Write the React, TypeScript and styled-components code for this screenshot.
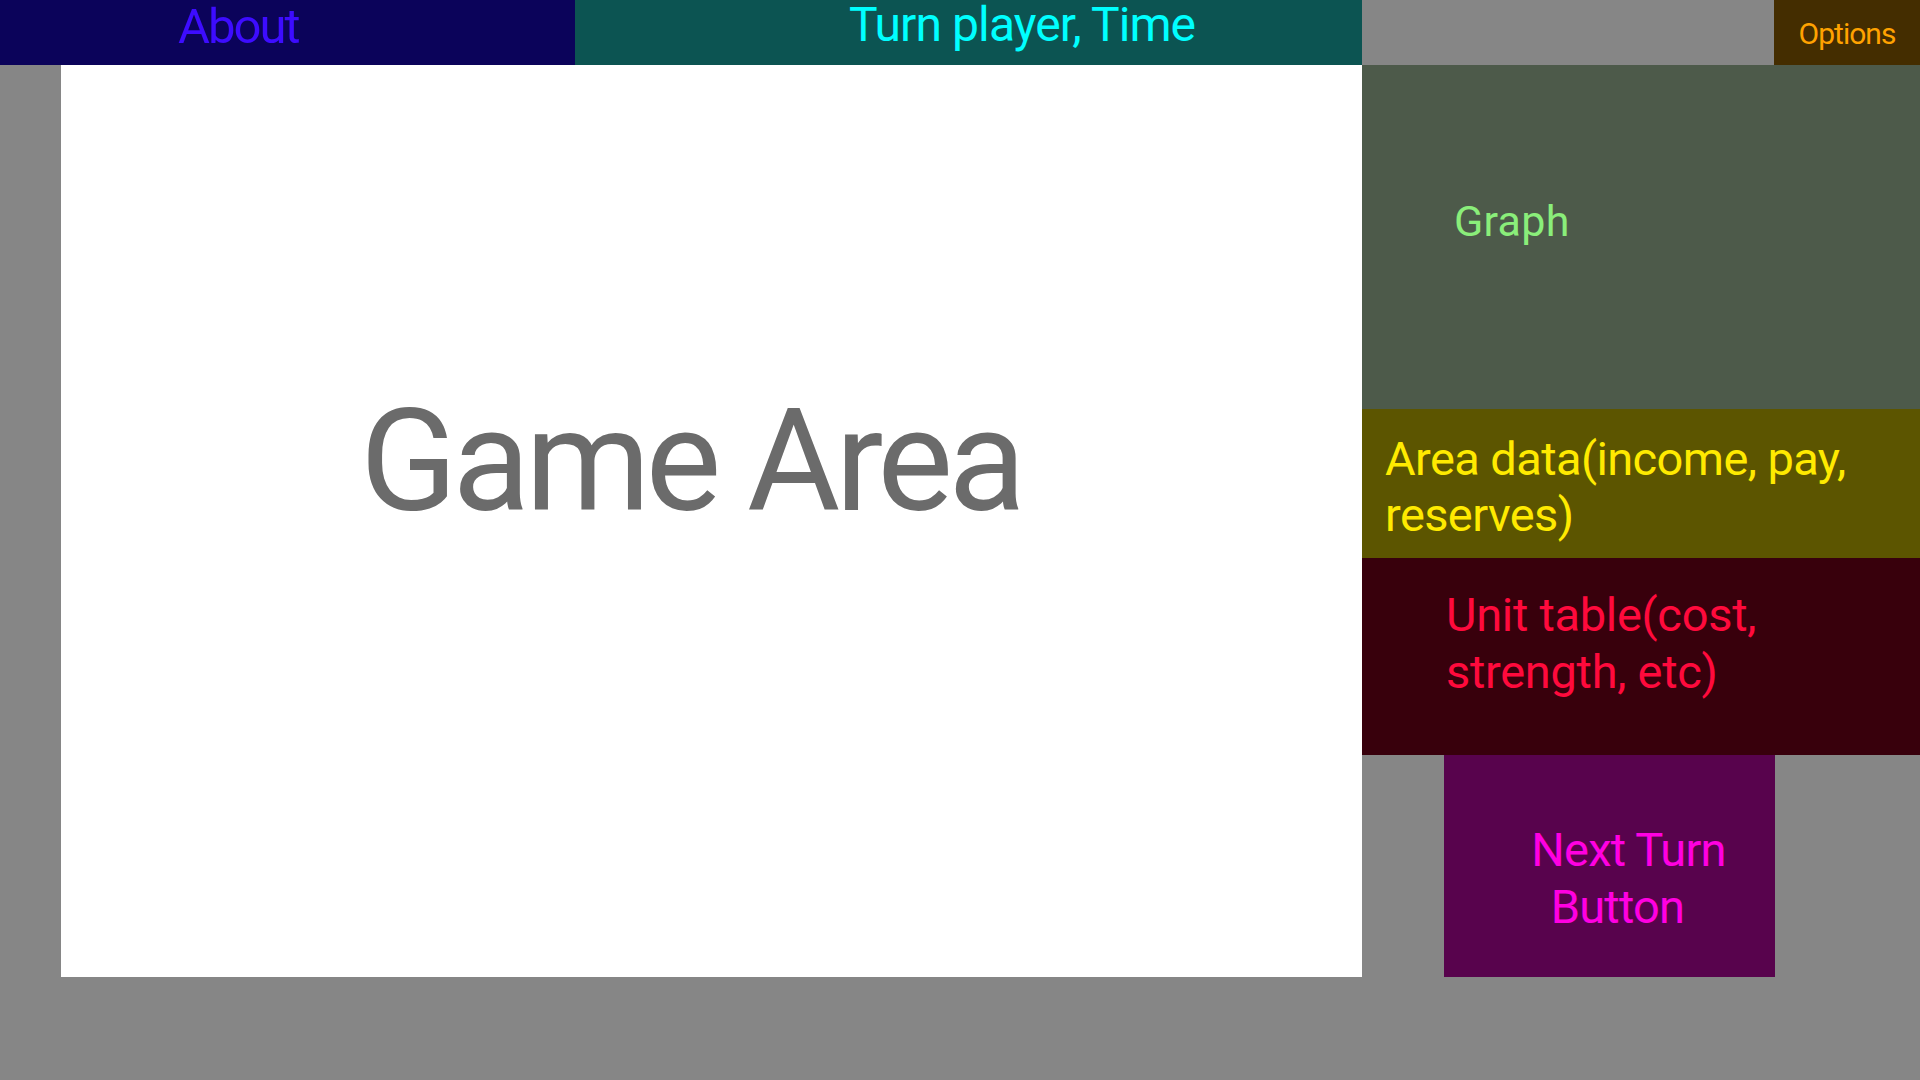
import React from "react";
import styled, { createGlobalStyle } from "styled-components";

const Global = createGlobalStyle`
  html, body {
    margin: 0;
    padding: 0;
    background: #868686;
    font-family: Roboto, "Noto Sans", sans-serif;
  }
  #root { height: 1080px; }
`;

const Page = styled.div`
  width: 1920px;
  height: 1080px;
  background: #868686;
  display: flex;
  flex-direction: column;
  overflow: hidden;
`;

const TopBar = styled.header`
  display: flex;
  height: 65px;
  flex: none;
`;

const BarCell = styled.div<{ $w?: number; $bg: string; $fg: string; $size: number; $pt: number; $pl?: number; $ls: number; $center?: boolean }>`
  width: ${(p) => (p.$w ? `${p.$w}px` : "auto")};
  flex: ${(p) => (p.$w ? "none" : "1")};
  height: 65px;
  box-sizing: border-box;
  background: ${(p) => p.$bg};
  color: ${(p) => p.$fg};
  font-size: ${(p) => p.$size}px;
  line-height: 1;
  letter-spacing: ${(p) => p.$ls}px;
  padding-top: ${(p) => p.$pt}px;
  padding-left: ${(p) => p.$pl ?? 0}px;
  text-align: ${(p) => (p.$center ? "center" : "left")};
  white-space: nowrap;
`;

const Main = styled.main`
  display: flex;
  padding-left: 61px;
  height: 912px;
  flex: none;
`;

const GameArea = styled.section`
  width: 1301px;
  height: 912px;
  background: #ffffff;
  color: #6b6b6b;
  font-size: 143px;
  line-height: 1;
  letter-spacing: -5px;
  box-sizing: border-box;
  padding-top: 325px;
  padding-left: 299px;
  white-space: nowrap;
`;

const Sidebar = styled.aside`
  width: 558px;
  display: flex;
  flex-direction: column;
`;

const Panel = styled.div<{ $h: number; $bg: string; $fg: string; $size: number; $lh: number; $pt: number; $pl: number; $ls: number }>`
  height: ${(p) => p.$h}px;
  flex: none;
  box-sizing: border-box;
  background: ${(p) => p.$bg};
  color: ${(p) => p.$fg};
  font-size: ${(p) => p.$size}px;
  line-height: ${(p) => p.$lh}px;
  letter-spacing: ${(p) => p.$ls}px;
  padding-top: ${(p) => p.$pt}px;
  padding-left: ${(p) => p.$pl}px;
`;

const ButtonRow = styled.div`
  height: 222px;
  flex: none;
  padding-left: 82px;
  display: flex;
`;

const NextTurnButton = styled.button`
  width: 331px;
  height: 222px;
  border: none;
  margin: 0;
  background: #58034d;
  color: #ff00e1;
  font-family: Roboto, "Noto Sans", sans-serif;
  font-size: 47px;
  line-height: 57px;
  letter-spacing: -0.8px;
  display: flex;
  flex-direction: column;
  justify-content: flex-start;
  align-items: center;
  box-sizing: border-box;
  padding: 66px 0 0 30px;
  cursor: pointer;
`;

const Line = styled.span<{ $shift?: number }>`
  display: block;
  white-space: nowrap;
  margin-left: ${(p) => p.$shift ?? 0}px;
`;

export default function App() {
  return (
    <>
      <Global />
      <Page>
        <TopBar>
          <BarCell $w={575} $bg="#0b035a" $fg="#3d0cff" $size={49} $pt={2} $pl={178} $ls={-2}>
            About
          </BarCell>
          <BarCell $w={787} $bg="#0c5452" $fg="#00ffff" $size={48} $pt={1} $pl={274} $ls={-0.9}>
            Turn player, Time
          </BarCell>
          <BarCell $bg="#868686" $fg="#868686" $size={30} $pt={0} $ls={0} />
          <BarCell $w={146} $bg="#442d00" $fg="#ffa200" $size={30} $pt={19} $ls={-1} $center>
            Options
          </BarCell>
        </TopBar>
        <Main>
          <GameArea>Game Area</GameArea>
          <Sidebar>
            <Panel $h={344} $bg="#4d5a4a" $fg="#8aee7a" $size={43} $lh={43} $pt={135} $pl={92} $ls={0.3}>
              Graph
            </Panel>
            <Panel $h={149} $bg="#5c5500" $fg="#ffea00" $size={47} $lh={56} $pt={22} $pl={23} $ls={-0.6}>
              Area data(income, pay, reserves)
            </Panel>
            <Panel $h={197} $bg="#38000c" $fg="#ff0a3c" $size={47} $lh={57} $pt={28} $pl={84} $ls={-0.3}>
              Unit table(cost, strength, etc)
            </Panel>
            <ButtonRow>
              <NextTurnButton>
                <Line $shift={8}>Next Turn</Line>
                <Line $shift={-14}>Button</Line>
              </NextTurnButton>
            </ButtonRow>
          </Sidebar>
        </Main>
      </Page>
    </>
  );
}
